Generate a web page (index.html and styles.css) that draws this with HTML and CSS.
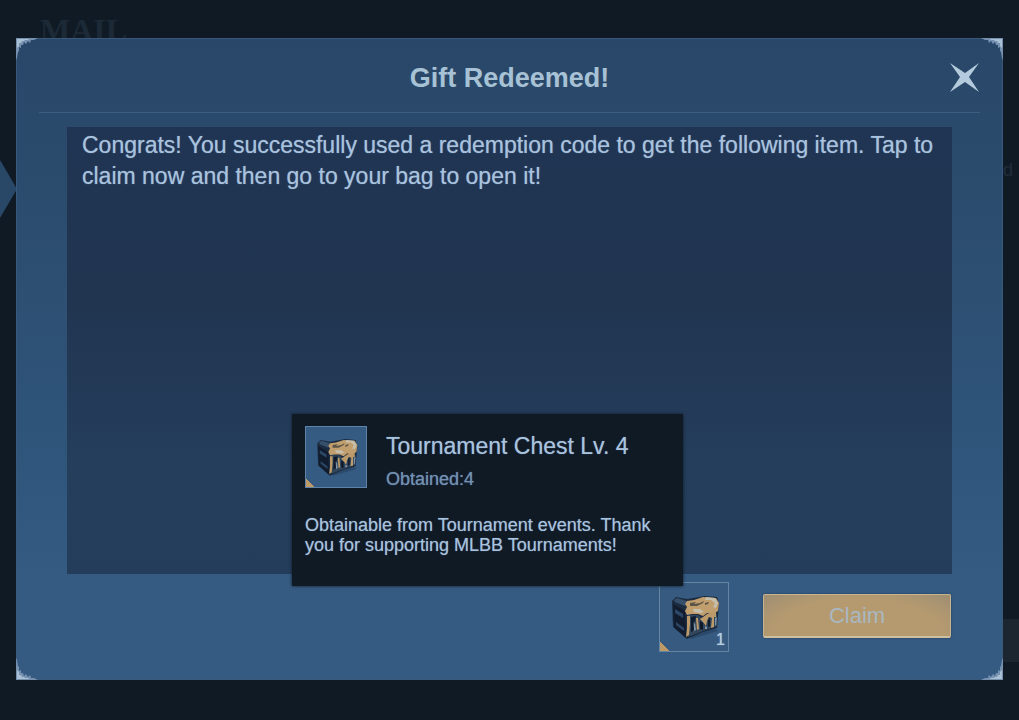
FILE: index.html
```
<!DOCTYPE html>
<html lang="en">
<head>
    <meta charset="UTF-8">
    <meta name="viewport" content="width=device-width, initial-scale=1">
    <title>Gift Redeemed!</title>
    <link rel="stylesheet" href="styles.css">
</head>
<body>
    <!-- dimmed mail screen behind the dialog -->
    <div class="backdrop" aria-hidden="true">
        <span class="backdrop-title">MAIL</span>
        <span class="backdrop-arrow"></span>
        <span class="backdrop-letter">d</span>
        <span class="backdrop-bar"></span>
    </div>

    <svg class="defs" aria-hidden="true">
        <symbol id="corner" viewBox="0 0 22 22">
            <path fill="#7691b0" d="M0 0H22L18 2L15 2L14 5L12 3L10 6L8 4L7 7L5 7L5 10L3 9L3 13L2 14L1 20L0 22Z"/>
            <path fill="#a9bfd4" d="M1 1H13L12 2L9 2L8 3L6 3L5 5L3 5L3 8L1 10Z"/>
        </symbol>
        <symbol id="chest" viewBox="0 0 54 46">
            <path fill="#243f5e" opacity=".6" d="M18 38L46 33L51 37L24 45Z"/>
            <!-- body -->
            <path fill="#1b2b40" d="M5 7L9 3L20 5L38 2L50 3L52 10L50 34L36 38L20 45L6 33Z"/>
            <path fill="#36506c" d="M7 6L10 4L20 7L18 12L8 8Z"/>
            <path fill="#111d2e" d="M6 10L18 17L19 44L7 33Z"/>
            <path fill="#2d4766" d="M8 15L16 20V24L8 19ZM9 28L17 34V37L9 31Z"/>
            <path fill="#31455b" d="M21 21L31 21L39 27L50 20V32L36 37L21 43Z"/>
            <!-- lid -->
            <path fill="#c09e6e" d="M20 7L27 6L36 3L49 4L52 9L51 17L46 20L40 19L36 22L31 20L25 20L20 21L18 17L20 13L18 10Z"/>
            <path fill="#c5bfae" d="M39 3L48 4L51 9L49 14L46 13L48 9L44 6L38 6ZM26 15L33 15L37 18L33 19L27 18Z"/>
            <path fill="#5b5548" d="M23 9L29 8L27 10L33 9L37 7L36 9L30 12L23 12ZM38 9L42 8L41 10L38 11Z"/>
            <!-- carved front -->
            <path fill="#bd9a69" d="M20 22L23 22L23 30L22 41L19 43L20 34ZM40 20L49 17L49 23L47 23L47 33L44 34L45 24L42 23L40 27L39 32L36 28L33 25L36 23ZM29 24L31 24L32 35L30 36Z"/>
            <path fill="#101c2d" d="M24 23L29 22L28 27L26 29L27 36L24 38ZM33 27L36 29L36 36L33 35ZM41 26L43 25L43 32L41 33Z"/>
            <path fill="#8396a6" d="M27 30L28 29L29 36L27 37ZM48 24L50 23L49 31L48 32ZM38 32L40 33L40 35L38 35Z"/>
        </symbol>
    </svg>

    <main class="dialog" role="dialog" aria-labelledby="dialogTitle">
        <svg class="corner top-left"><use href="#corner"/></svg>
        <svg class="corner top-right"><use href="#corner"/></svg>
        <svg class="corner bottom-left"><use href="#corner"/></svg>
        <svg class="corner bottom-right"><use href="#corner"/></svg>

        <header class="dialog-header">
            <h1 id="dialogTitle">Gift Redeemed!</h1>
            <button class="close" type="button" aria-label="Close">
                <svg viewBox="0 0 32 32" width="32" height="32">
                    <path fill="#b4cbdd" d="M2 1L17 11L31 1L21 15L31 30L17 20L2 30L12 15Z"/>
                </svg>
            </button>
        </header>

        <section class="message">
            <p>Congrats! You successfully used a redemption code to get the following item. Tap to claim now and then go to your bag to open it!</p>
        </section>

        <footer class="dialog-footer">
            <div class="item">
                <button class="item-slot" type="button" aria-describedby="itemTip">
                    <svg class="chest"><use href="#chest"/></svg>
                    <span class="count">1</span>
                </button>
                <div class="tooltip" id="itemTip" role="tooltip">
                    <div class="tooltip-head">
                        <div class="thumb">
                            <svg class="chest small"><use href="#chest"/></svg>
                        </div>
                        <div>
                            <h2>Tournament Chest Lv. 4</h2>
                            <p class="obtained">Obtained:4</p>
                        </div>
                    </div>
                    <p class="description">Obtainable from Tournament events. Thank you for supporting MLBB Tournaments!</p>
                </div>
            </div>
            <button class="claim" type="button">Claim</button>
        </footer>
    </main>
</body>
</html>
```
FILE: styles.css
```
* {
    box-sizing: border-box;
}

body {
    display: flex;
    min-height: 100vh;
    margin: 0;
    padding: 38px 16px 40px;
    background-color: #101a25;
    color: #a9c3de;
    font-family: "Liberation Sans", Arial, sans-serif;
}

h1,
h2,
p {
    margin: 0;
}

button {
    padding: 0;
    border: none;
    background: none;
    color: inherit;
    font-family: inherit;
    cursor: pointer;
}

.defs {
    position: absolute;
    width: 0;
    height: 0;
}

.backdrop {
    position: absolute;
    inset: 0;
    overflow: hidden;
}

.backdrop-title {
    position: absolute;
    top: 12px;
    left: 40px;
    color: #1c2936;
    font-family: "Liberation Serif", serif;
    font-size: 32px;
    font-weight: bold;
}

.backdrop-arrow {
    position: absolute;
    top: 160px;
    left: 0;
    width: 17px;
    height: 58px;
    background-color: #294767;
    clip-path: polygon(0 0, 100% 50%, 0 100%);
}

.backdrop-letter {
    position: absolute;
    top: 160px;
    right: 6px;
    color: #202d3a;
    font-size: 18px;
}

.backdrop-bar {
    position: absolute;
    right: 0;
    bottom: 58px;
    width: 60px;
    height: 43px;
    background-color: #1b2631;
}

.dialog {
    position: relative;
    display: flex;
    flex: 1;
    flex-direction: column;
    border: 1px solid #38597b;
    background: linear-gradient(#294769, #2b4c6d 25%, #2f547a 60%, #365b82 85%);
}

.corner {
    position: absolute;
    width: 22px;
    height: 22px;
}

.top-left {
    top: -1px;
    left: -1px;
}

.top-right {
    top: -1px;
    right: -1px;
    transform: scaleX(-1);
}

.bottom-left {
    bottom: -1px;
    left: -1px;
    transform: scaleY(-1);
}

.bottom-right {
    right: -1px;
    bottom: -1px;
    transform: scale(-1);
}

.dialog-header {
    display: grid;
    grid-template-columns: 1fr auto 1fr;
    align-items: center;
    height: 74px;
    margin: 0 22px;
    padding-top: 4px;
    border-bottom: 1px solid #3c5f81;
}

.dialog-header h1 {
    grid-column: 2;
    color: #a8c2d5;
    font-size: 27px;
    font-weight: bold;
    line-height: 32px;
}

.close {
    justify-self: end;
    height: 32px;
}

.message {
    flex: 1;
    margin: 14px 50px 0;
    padding: 3px 15px;
    background: linear-gradient(#203553, #213551 40%, #243e5c 75%, #243d5a);
    font-size: 23px;
    line-height: 31px;
    text-shadow: 0 0 1px #6f8bab;
}

.dialog-footer {
    display: flex;
    justify-content: flex-end;
    align-items: flex-start;
    gap: 34px;
    padding: 8px 51px 27px;
}

.item {
    position: relative;
}

.item-slot {
    position: relative;
    display: grid;
    place-items: center;
    width: 70px;
    height: 70px;
    border: 1px solid #6484a2;
    background: linear-gradient(45deg, #be9a67 7px, transparent 7px), #365a80;
}

.chest {
    width: 54px;
    height: 48px;
}

.chest.small {
    width: 46px;
    height: 40px;
}

.count {
    position: absolute;
    right: 3px;
    bottom: 2px;
    color: #b4cbe0;
    font-size: 16px;
    line-height: 18px;
    text-shadow: 0 0 1px #b4cbe0;
}

.tooltip {
    position: absolute;
    right: 46px;
    bottom: 66px;
    width: 391px;
    padding: 12px 13px 31px;
    background-color: #101a25;
    box-shadow: 0 0 3px #101a25;
    text-shadow: 0 0 1px #5f7b9b;
}

.tooltip-head {
    display: flex;
    gap: 19px;
}

.thumb {
    display: grid;
    place-items: center;
    width: 62px;
    height: 62px;
    border: 1px solid #5f83a8;
    background: linear-gradient(45deg, #be9a67 6px, transparent 6px), #355b83;
}

.tooltip h2 {
    padding-top: 6px;
    font-size: 23px;
    font-weight: normal;
    line-height: 28px;
}

.obtained {
    padding-top: 8px;
    color: #7290b2;
    font-size: 18px;
    line-height: 22px;
}

.description {
    padding-top: 25px;
    font-size: 18px;
    line-height: 20px;
}

.claim {
    width: 188px;
    height: 44px;
    margin-top: 12px;
    border: 1px solid #c7b58f;
    border-bottom: 2px solid #cdbf9f;
    border-radius: 2px;
    background: radial-gradient(ellipse at bottom, #b59a6f 65%, #9f8e73);
    box-shadow: 0 0 2px #1d3450;
    color: #a9b8c0;
    font-size: 22px;
}
```
